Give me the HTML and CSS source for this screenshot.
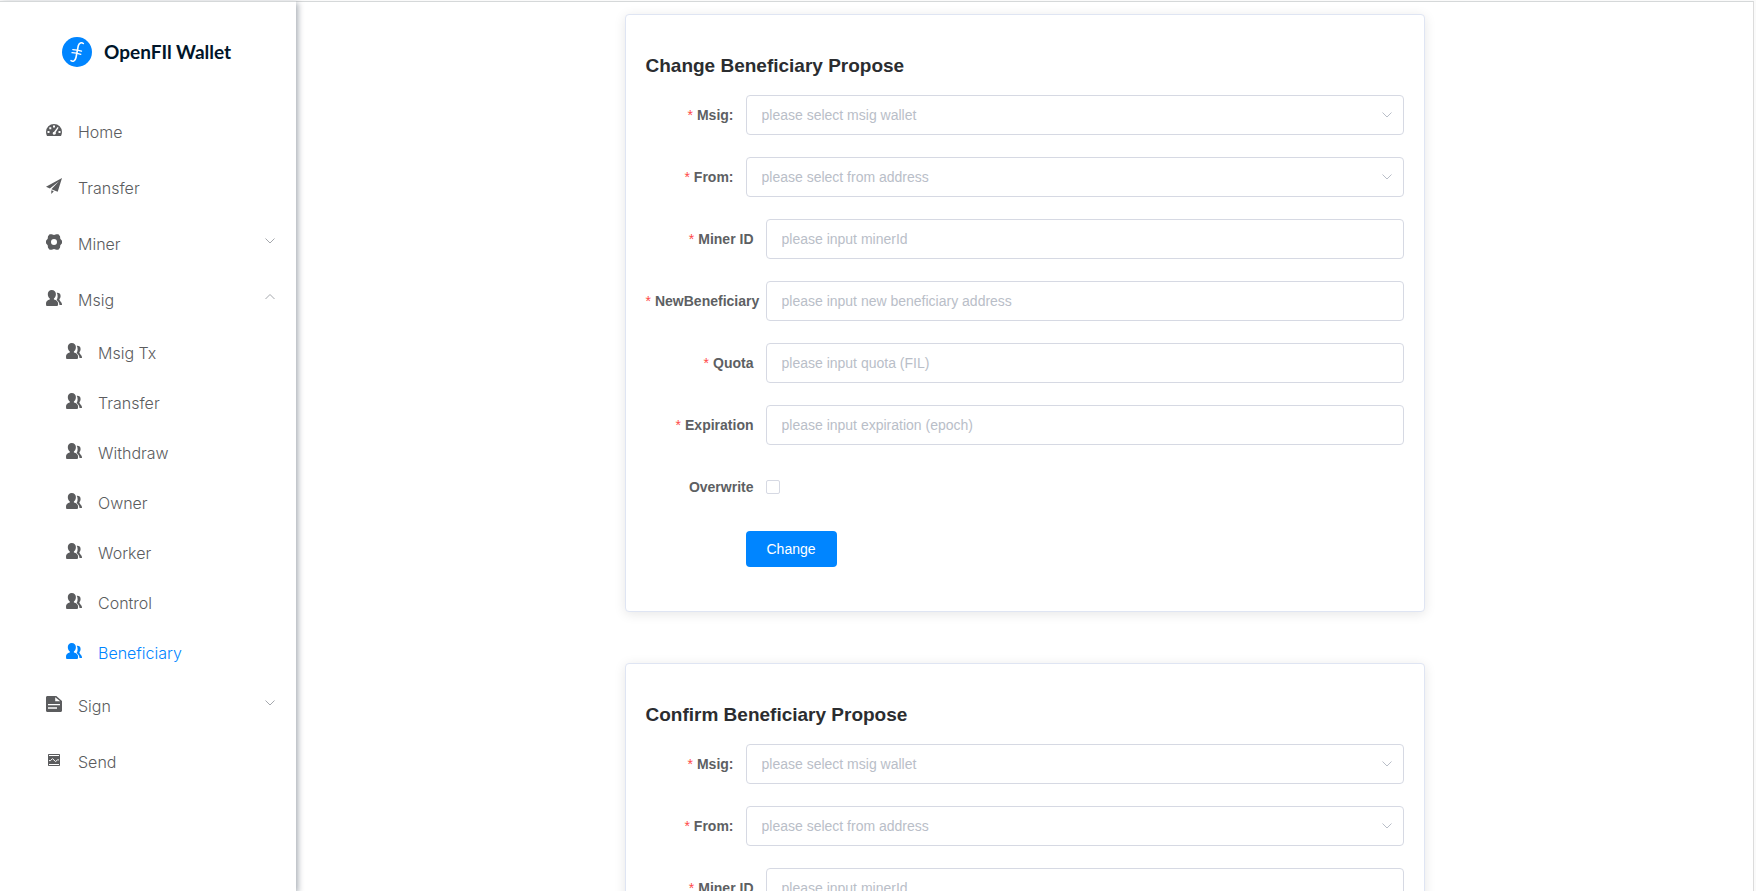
FILE: index.html
```html
<!DOCTYPE html>
<html lang="en">
<head>
<meta charset="utf-8">
<meta name="viewport" content="width=device-width, initial-scale=1">
<title>OpenFIl Wallet</title>
<link rel="stylesheet" href="styles.css">
</head>
<body>
<svg width="0" height="0" class="sprite" aria-hidden="true">
  <symbol id="users" viewBox="0 0 16 16">
    <path d="M5.700 0C3.300 0 1.800 1.700 1.800 4c0 2 .8 3.700 2 4.500v1C1.400 10.200 0 11.200 0 13.400c0 1.200.2 2.500.7 2.500h10.600c.5 0 .8-1.300.8-2.500 0-2.200-1.700-3.200-4.200-3.900v-1C9.100 7.700 9.900 6 9.900 4c0-2.300-1.600-4-4.200-4z"/>
    <path d="M10.700 2.700c2.200-.3 3.900.8 3.900 3.200 0 1.500-.6 2.600-1.300 3.200.1 1 .5 1.600 1.200 2.300 1 1 1.500 1.900 1.500 3.500h-2.500c-.2-2.300-1.300-3.700-2.900-4.800 1.200-1.700 1.500-5.200.1-7.400z"/>
  </symbol>
  <symbol id="down" viewBox="0 0 12 12"><path d="M1.500 3.500 6 8l4.500-4.500" fill="none" stroke="currentColor"/></symbol>
  <symbol id="up" viewBox="0 0 12 12"><path d="M1.500 8 6 3.500 10.500 8" fill="none" stroke="currentColor"/></symbol>
</svg>
<div class="app">
  <aside class="sidebar">
    <div class="brand">
      <svg class="brand-mark" viewBox="0 0 30 30" aria-hidden="true">
        <circle cx="15" cy="15" r="15" fill="#0085ff"/>
        <g fill="none" stroke="#fff" stroke-linecap="round">
          <path d="M21.300 6.500c-1.800-1.600-4.200-.7-5 2.200L14 20.500c-.7 3.300-3 4.500-5 3.200" stroke-width="1.600"/>
          <path d="M10.800 12.600c3 0 5.500.4 8.700 1.600M10 15.700c3.200 0 5.700.4 8.800 1.600" stroke-width="1.300"/>
        </g>
      </svg>
      <span class="brand-name">OpenFIl Wallet</span>
    </div>
    <nav class="menu">
      <a class="item" href="#home">
        <svg class="icon" viewBox="0 0 16 16" aria-hidden="true"><path fill-rule="evenodd" d="M8 2a8 8 0 0 0-8 8c0 1.500.4 2.800 1 4h14c.6-1.200 1-2.500 1-4a8 8 0 0 0-8-8zM7 3.500h2v2H7zM3.300 5.200h2v2h-2zM1.500 9h2v2h-2zM12.500 9h2v2h-2zM11.600 5l1 .7-2.900 4.500c.4 1 .1 2-.8 2.400-1.100.5-2.200-.3-2.200-1.400 0-.9.600-1.400 1.400-1.500z"/></svg>
        <span>Home</span></a>
      <a class="item" href="#transfer">
        <svg class="icon" viewBox="0 0 16 16" aria-hidden="true"><path d="M16 0 0 8.800l3.900 1.600L13 3.300 5.400 11.300l6.300 2.500zM5.300 12.200V16l2.500-2.800z"/></svg>
        <span>Transfer</span></a>
      <button class="item" type="button">
        <svg class="icon" viewBox="0 0 16 16" aria-hidden="true"><path fill-rule="evenodd" d="M3.600.300h2.100L8 1l2.300-.7h2.100l1.600 2 .3 2.500L16 6.700v2.600l-1.700 1.900-.3 2.500-1.600 2h-2.100L8 15l-2.300.7H3.600l-1.600-2-.3-2.500L0 9.300V6.700l1.700-1.900.3-2.500zM8 5a3 3 0 1 0 0 6 3 3 0 0 0 0-6z"/></svg>
        <span>Miner</span><svg class="arrow" aria-hidden="true"><use href="#down"/></svg></button>
      <button class="item" type="button" aria-expanded="true">
        <svg class="icon" aria-hidden="true"><use href="#users"/></svg>
        <span>Msig</span><svg class="arrow" aria-hidden="true"><use href="#up"/></svg></button>
      <div class="submenu">
        <a class="item" href="#msig-tx"><svg class="icon" aria-hidden="true"><use href="#users"/></svg><span>Msig Tx</span></a>
        <a class="item" href="#msig-transfer"><svg class="icon" aria-hidden="true"><use href="#users"/></svg><span>Transfer</span></a>
        <a class="item" href="#withdraw"><svg class="icon" aria-hidden="true"><use href="#users"/></svg><span>Withdraw</span></a>
        <a class="item" href="#owner"><svg class="icon" aria-hidden="true"><use href="#users"/></svg><span>Owner</span></a>
        <a class="item" href="#worker"><svg class="icon" aria-hidden="true"><use href="#users"/></svg><span>Worker</span></a>
        <a class="item" href="#control"><svg class="icon" aria-hidden="true"><use href="#users"/></svg><span>Control</span></a>
        <a class="item active" href="#beneficiary" aria-current="page"><svg class="icon" aria-hidden="true"><use href="#users"/></svg><span>Beneficiary</span></a>
      </div>
      <button class="item" type="button">
        <svg class="icon" viewBox="0 0 16 16" aria-hidden="true"><path fill-rule="evenodd" d="M1.500 0h8.800L16 5v9.500c0 .9-.6 1.500-1.500 1.500h-13C.6 16 0 15.400 0 14.500v-13C0 .6.600 0 1.500 0zM9.200 1.300v4h5zM2 8v1.200h12V8zM2 11.300v1.400h9v-1.400z"/></svg>
        <span>Sign</span><svg class="arrow" aria-hidden="true"><use href="#down"/></svg></button>
      <a class="item" href="#send">
        <svg class="icon" viewBox="0 0 16 16" aria-hidden="true"><path fill-rule="evenodd" d="M3 2h10c.6 0 1 .4 1 1v10c0 .6-.4 1-1 1H3c-.6 0-1-.4-1-1V3c0-.6.4-1 1-1zM3 3v1h10V3zM3 12v1h10v-1z"/><path d="M3 8.600h1.500l2-2 3 3 2-1.700H13" fill="none" stroke="#fff"/></svg>
        <span>Send</span></a>
    </nav>
  </aside>
  <main class="main">
    <form class="card">
      <h3 class="title">Change Beneficiary Propose</h3>
      <div class="row">
        <label class="label required" for="c-msig">Msig:</label>
        <div class="select"><select id="c-msig" class="field" required><option value="">please select msig wallet</option></select><svg class="caret" aria-hidden="true"><use href="#down"/></svg></div>
      </div>
      <div class="row">
        <label class="label required" for="c-from">From:</label>
        <div class="select"><select id="c-from" class="field" required><option value="">please select from address</option></select><svg class="caret" aria-hidden="true"><use href="#down"/></svg></div>
      </div>
      <div class="row wide">
        <label class="label required" for="c-miner">Miner ID</label>
        <input id="c-miner" class="field" type="text" placeholder="please input minerId">
      </div>
      <div class="row wide">
        <label class="label required" for="c-new">NewBeneficiary</label>
        <input id="c-new" class="field" type="text" placeholder="please input new beneficiary address">
      </div>
      <div class="row wide">
        <label class="label required" for="c-quota">Quota</label>
        <input id="c-quota" class="field" type="text" placeholder="please input quota (FIL)">
      </div>
      <div class="row wide">
        <label class="label required" for="c-exp">Expiration</label>
        <input id="c-exp" class="field" type="text" placeholder="please input expiration (epoch)">
      </div>
      <div class="row wide">
        <label class="label" for="c-over">Overwrite</label>
        <input id="c-over" class="check" type="checkbox">
      </div>
      <div class="row actions"><button class="primary" type="button">Change</button></div>
    </form>
    <form class="card">
      <h3 class="title">Confirm Beneficiary Propose</h3>
      <div class="row">
        <label class="label required" for="f-msig">Msig:</label>
        <div class="select"><select id="f-msig" class="field" required><option value="">please select msig wallet</option></select><svg class="caret" aria-hidden="true"><use href="#down"/></svg></div>
      </div>
      <div class="row">
        <label class="label required" for="f-from">From:</label>
        <div class="select"><select id="f-from" class="field" required><option value="">please select from address</option></select><svg class="caret" aria-hidden="true"><use href="#down"/></svg></div>
      </div>
      <div class="row wide">
        <label class="label required" for="f-miner">Miner ID</label>
        <input id="f-miner" class="field" type="text" placeholder="please input minerId">
      </div>
    </form>
  </main>
</div>
</body>
</html>
```
FILE: styles.css
```css
* { box-sizing: border-box; }
body {
  margin: 0;
  background: #fff;
  color: #5d5f63;
  font-family: "Liberation Sans", Arial, sans-serif;
  font-size: 14px;
}
.sprite { position: absolute; }
.app {
  display: flex;
  height: 100vh;
  overflow: hidden;
  padding: 1px 2px 0 0;
  background: #fafafa;
}
.sidebar {
  position: relative;
  flex: 0 0 296px;
  border-top: 1px solid #d5d8d9;
  background: #fff;
  box-shadow: 2px 2px 6px rgba(0, 21, 41, 0.35);
}
.brand {
  display: flex;
  align-items: center;
  gap: 12px;
  height: 102px;
  padding: 0 20px 2px 62px;
  color: #001529;
  font-family: Lato, sans-serif;
  font-size: 19px;
  font-weight: 700;
}
.brand-mark { width: 30px; height: 30px; }
.brand-name { padding-bottom: 2px; }
.item {
  display: flex;
  align-items: center;
  width: 100%;
  height: 56px;
  padding: 0 20px 0 46px;
  border: 0;
  background: none;
  color: #5b5c5e;
  font-family: Inter, sans-serif;
  font-size: 16px;
  font-weight: 300;
  text-align: left;
  text-decoration: none;
  cursor: pointer;
}
.submenu .item { height: 50px; padding-left: 66px; }
.submenu .active { color: #0085ff; }
.icon {
  width: 16px;
  height: 16px;
  margin: 0 16px 4px 0;
  fill: currentColor;
}
.arrow {
  width: 12px;
  height: 12px;
  margin: 0 0 6px auto;
  color: #a5a8ad;
}
.main {
  flex: 1;
  display: flex;
  flex-direction: column;
  align-items: center;
  gap: 51px;
  overflow: hidden;
  padding: 12px 20px 0;
  border-top: 1px solid #d5d8d9;
  border-right: 1px solid #dcdcdc;
  background: #fff;
}
.card {
  flex: none;
  width: 100%;
  max-width: 800px;
  padding: 0 20px 20px;
  border: 1px solid #dfe5f3;
  border-radius: 4px;
  background: #fff;
  box-shadow: 0 2px 12px rgba(0, 0, 0, 0.1);
}
.title {
  margin: 22px 0 0;
  color: #2b2d30;
  font-size: 19px;
  line-height: 58px;
}
.row {
  display: grid;
  grid-template-columns: 100px 1fr;
  align-items: center;
  min-height: 40px;
  margin-bottom: 22px;
}
.wide { grid-template-columns: 120px 1fr; }
.label {
  padding-right: 12px;
  font-weight: 700;
  text-align: right;
  white-space: nowrap;
}
.required::before {
  content: "*";
  margin-right: 4px;
  color: #ff4949;
  font-weight: 400;
}
.select { position: relative; }
.field {
  display: block;
  width: 100%;
  height: 40px;
  padding: 0 15px;
  border: 1px solid #d6d9e3;
  border-radius: 4px;
  background: #fff;
  color: #b9bec8;
  font: inherit;
  appearance: none;
}
.field::placeholder { color: #b9bec8; }
.caret {
  position: absolute;
  top: 14px;
  right: 11px;
  width: 12px;
  height: 12px;
  color: #b9bec8;
  pointer-events: none;
}
.check {
  width: 14px;
  height: 14px;
  margin: 0;
  border: 1px solid #d6d9e3;
  border-radius: 2px;
  background: #fff;
  appearance: none;
}
.primary {
  grid-column: 2;
  justify-self: start;
  height: 36px;
  padding: 0 21px;
  border: 0;
  border-radius: 4px;
  background: #0085ff;
  color: #fff;
  font: inherit;
}
```
